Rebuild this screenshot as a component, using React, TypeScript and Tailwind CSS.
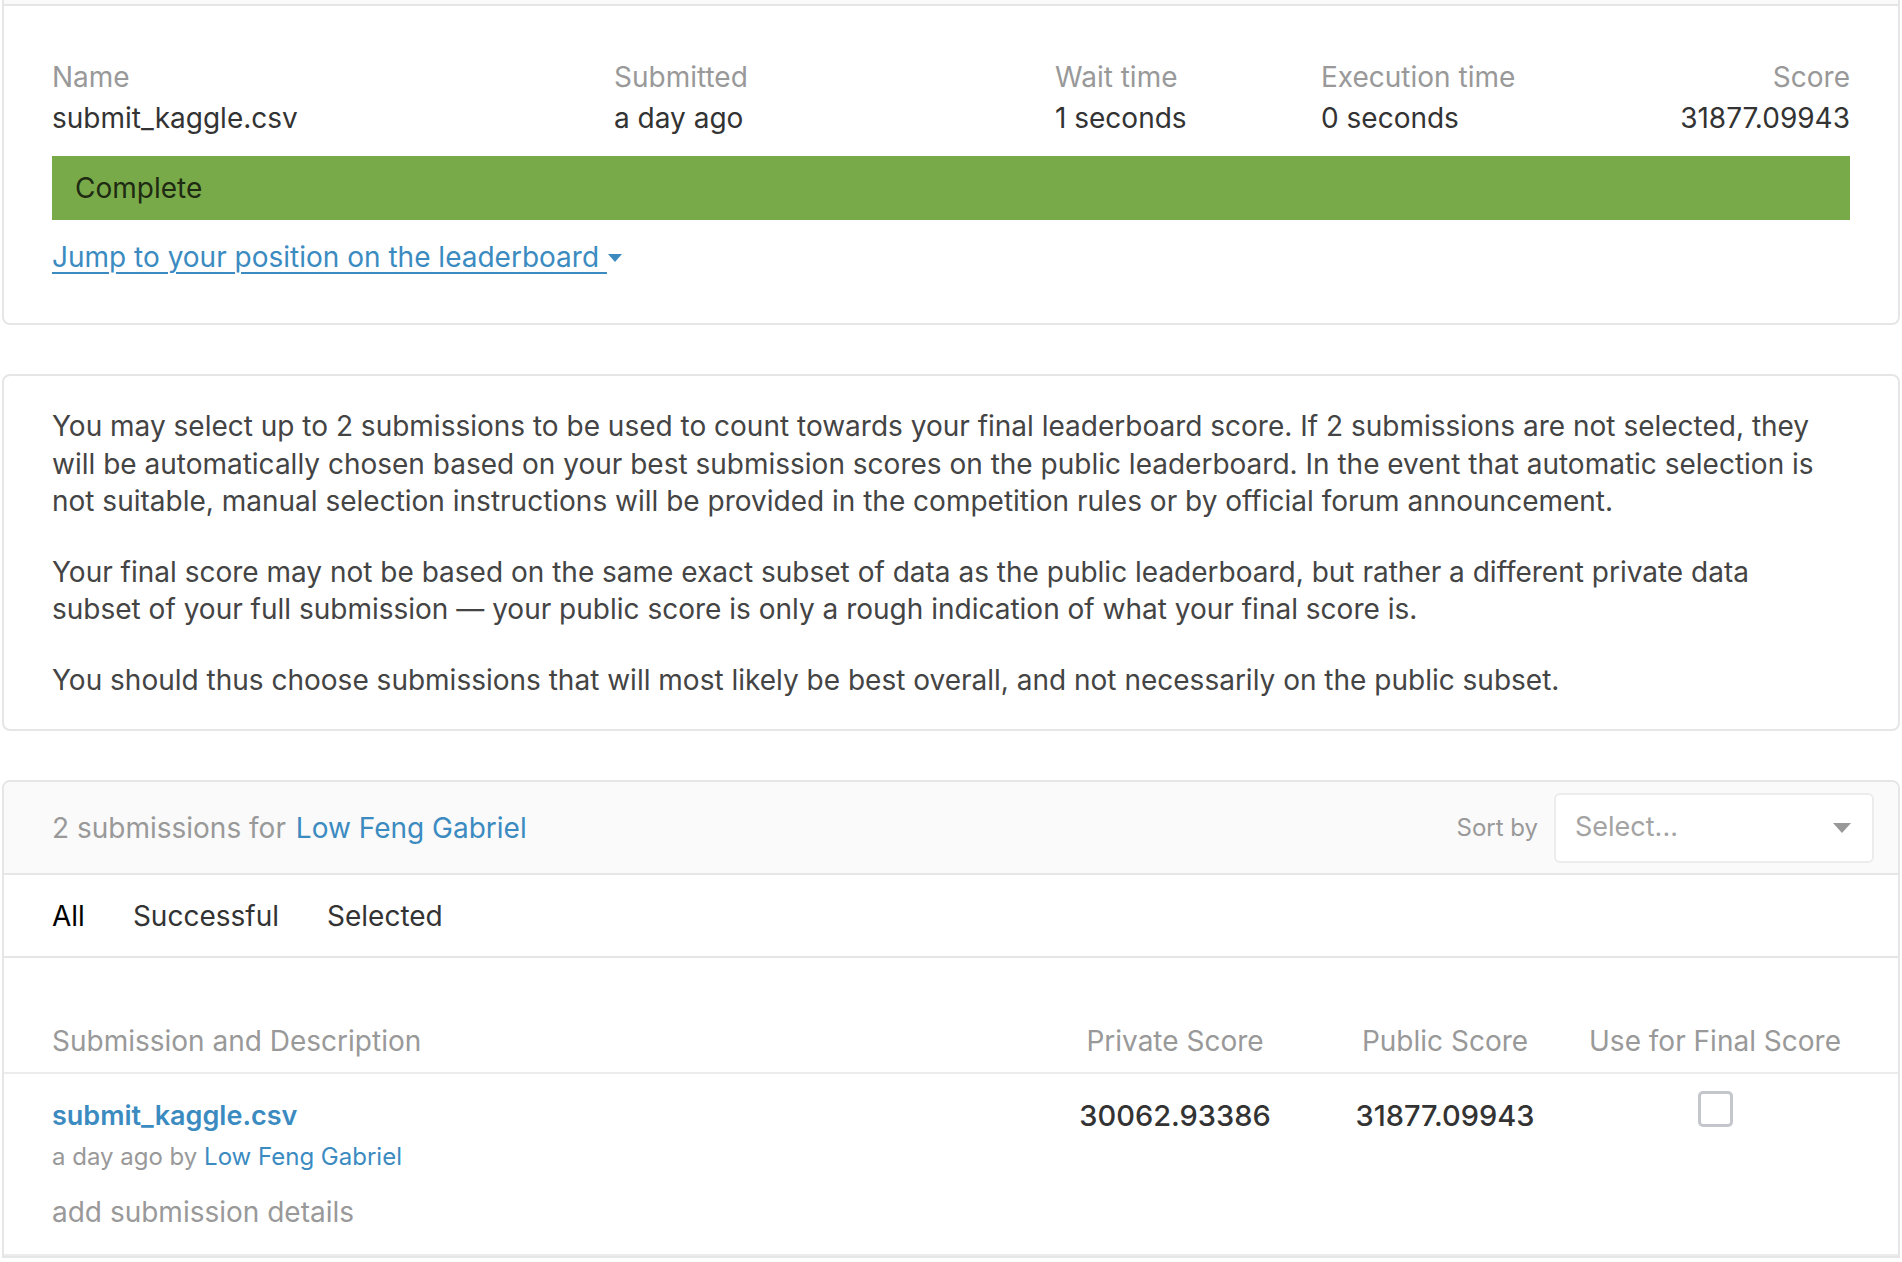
import React from 'react';

// ============================================
// SUBMISSION DETAILS PAGE
// ============================================

const font = { fontFamily: 'Inter, "Noto Sans", sans-serif' };

function LatestSubmission() {
  return (
    <div className="rounded-b-lg border-2 border-t-0 border-[#e6e6e6] bg-white">
      <div className="h-[6px] border-b-2 border-[#e6e6e6] bg-[#fafafa]" />
      <div className="px-[48px] pt-[51px] pb-[46px]">
        <div className="flex text-[28px] leading-[41px]">
          <div className="w-[562px]">
            <div className="text-[#999]">Name</div>
            <div className="text-[#333]">submit_kaggle.csv</div>
          </div>
          <div className="w-[441px]">
            <div className="text-[#999]">Submitted</div>
            <div className="text-[#333]">a day ago</div>
          </div>
          <div className="w-[266px]">
            <div className="text-[#999]">Wait time</div>
            <div className="text-[#333]">1 seconds</div>
          </div>
          <div className="flex-1">
            <div className="text-[#999]">Execution time</div>
            <div className="text-[#333]">0 seconds</div>
          </div>
          <div className="text-right">
            <div className="text-[#999]">Score</div>
            <div className="text-[#333]">31877.09943</div>
          </div>
        </div>
        <div className="mt-[17px] flex h-[64px] items-center bg-[#79aa49] px-[23px] text-[28px] text-[#1e2a12]">
          Complete
        </div>
        <div className="mt-[17px] flex items-center text-[28px] leading-[40px]">
          <a href="#" className="text-[#3b8bc1] underline underline-offset-[5px] decoration-[2px]">
            Jump to your position on the leaderboard&nbsp;
          </a>
          <svg width="16" height="10" viewBox="0 0 16 10" className="mt-[2px]">
            <path d="M1 1 L15 1 L8 9 Z" fill="#3b8bc1" />
          </svg>
        </div>
      </div>
    </div>
  );
}

function SelectionNotes() {
  return (
    <div className="rounded-lg border-2 border-[#e6e6e6] bg-white pl-[48px] pr-[64px] pt-[32px] pb-[30px] text-[28px] leading-[37.5px] text-[#444]">
      <p className="mb-[33px]">
        You may select up to 2 submissions to be used to count towards your final leaderboard score. If 2 submissions
        are not selected, they will be automatically chosen based on your best submission scores on the public
        leaderboard. In the event that automatic selection is not suitable, manual selection instructions will be
        provided in the competition rules or by official forum announcement.
      </p>
      <p className="mb-[33px]">
        Your final score may not be based on the same exact subset of data as the public leaderboard, but rather a
        different private data subset of your full submission — your public score is only a rough indication of what
        your final score is.
      </p>
      <p>
        You should thus choose submissions that will most likely be best overall, and not necessarily on the public
        subset.
      </p>
    </div>
  );
}

function SubmissionsTable() {
  return (
    <div className="rounded-t-lg border-2 border-[#e6e6e6] bg-white">
      {/* Header */}
      <div className="flex h-[93px] items-center justify-between rounded-t-lg border-b-2 border-[#e6e6e6] bg-[#fafafa] pl-[48px] pr-[24px]">
        <div className="text-[28px] text-[#999]">
          2 submissions for <span className="ml-[2px] text-[#3b8bc1]">Low Feng Gabriel</span>
        </div>
        <div className="flex items-center gap-[16px]">
          <span className="text-[24px] text-[#999]">Sort by</span>
          <div className="flex h-[70px] w-[320px] items-center justify-between rounded-md border-2 border-[#ececec] bg-white pl-[19px] pr-[20px]">
            <span className="text-[27px] text-[#a3a3a3]">Select...</span>
            <svg width="20" height="12" viewBox="0 0 20 12">
              <path d="M1 1 L19 1 L10 11 Z" fill="#999" />
            </svg>
          </div>
        </div>
      </div>

      {/* Tabs */}
      <div className="flex h-[83px] items-center gap-[48px] border-b-2 border-[#e6e6e6] px-[48px] text-[28px]">
        <span className="text-black">All</span>
        <span className="text-[#333]">Successful</span>
        <span className="text-[#333]">Selected</span>
      </div>

      {/* Column headings */}
      <div className="flex items-end border-b-2 border-[#ececec] px-[48px] pt-[63px] pb-[11px] text-[28px] leading-[40px] text-[#999]">
        <div className="flex-1">Submission and Description</div>
        <div className="w-[270px] text-center">Private Score</div>
        <div className="w-[270px] text-center">Public Score</div>
        <div className="w-[270px] text-center">Use for Final Score</div>
      </div>

      {/* Row */}
      <div className="flex border-b-2 border-[#ececec] px-[48px] pt-[22px] pb-[22px]">
        <div className="flex-1">
          <div className="text-[27px] font-semibold leading-[40px] text-[#3b8bc1]">submit_kaggle.csv</div>
          <div className="text-[24px] leading-[42px] text-[#999]">
            a day ago by <span className="text-[#3b8bc1]">Low Feng Gabriel</span>
          </div>
          <div className="mt-[14px] text-[28px] leading-[40px] text-[#999]">add submission details</div>
        </div>
        <div className="w-[270px] text-center text-[29px] font-medium leading-[40px] text-[#333]">30062.93386</div>
        <div className="w-[270px] text-center text-[29px] font-medium leading-[40px] text-[#333]">31877.09943</div>
        <div className="flex w-[270px] justify-center">
          <div className="mt-[-5px] h-[36px] w-[35px] rounded-[5px] border-[3px] border-[#c3c6cb] bg-white" />
        </div>
      </div>
    </div>
  );
}

export default function App() {
  return (
    <div className="min-h-screen bg-white px-[2px]" style={font}>
      <LatestSubmission />
      <div className="mt-[49px]">
        <SelectionNotes />
      </div>
      <div className="mt-[49px]">
        <SubmissionsTable />
      </div>
    </div>
  );
}
